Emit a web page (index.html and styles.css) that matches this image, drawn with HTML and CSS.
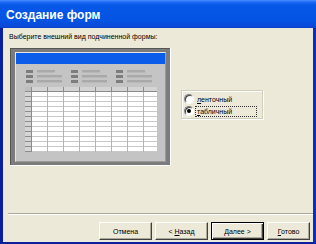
FILE: index.html
```html
<!DOCTYPE html>
<html>
<head>
<meta charset="utf-8">
<link rel="stylesheet" href="styles.css">
</head>
<body>
<div class="window">
  <div class="titlebar">Создание форм</div>
  <div class="content">
    <div class="prompt">Выберите внешний вид подчиненной формы:</div>
    <div class="main">
      <div class="preview">
        <div class="frame">
          <div class="panel">
            <div class="bar"></div>
            <div class="fields">
              <div class="fgroup">
                <div class="frow"><span class="lbl"></span><span class="val v1"></span></div>
                <div class="frow"><span class="lbl"></span><span class="val v2"></span></div>
                <div class="frow"><span class="lbl"></span><span class="val v2"></span></div>
              </div>
              <div class="fgroup">
                <div class="frow"><span class="lbl"></span><span class="val v1"></span></div>
                <div class="frow"><span class="lbl"></span><span class="val v2"></span></div>
                <div class="frow"><span class="lbl"></span><span class="val v2"></span></div>
              </div>
              <div class="fgroup">
                <div class="frow"><span class="lbl"></span><span class="val v1"></span></div>
                <div class="frow"><span class="lbl"></span><span class="val v2"></span></div>
                <div class="frow"><span class="lbl"></span><span class="val v2"></span></div>
              </div>
            </div>
            <div class="grid">
              <div class="corner"></div>
              <div class="colhead"></div>
              <div class="rowhead"></div>
              <div class="cells"></div>
            </div>
          </div>
        </div>
      </div>
      <div class="options">
        <div class="radiobox">
          <label class="radio"><span class="circle"></span><span class="rtext"><u>л</u>енточный</span></label>
          <label class="radio"><span class="circle checked"></span><span class="rtext focus"><u>т</u>абличный</span></label>
        </div>
      </div>
    </div>
    <div class="separator"></div>
    <div class="buttons">
      <button class="btn cancel">Отмена</button>
      <button class="btn">&lt; <u>Н</u>азад</button>
      <button class="btn default"><u>Д</u>алее &gt;</button>
      <button class="btn finish"><u>Г</u>отово</button>
    </div>
  </div>
</div>
</body>
</html>
```

FILE: styles.css
```css
html, body {
  margin: 0;
  padding: 0;
  background: #ECE9D8;
}
.window {
  width: 316px;
  height: 244px;
  box-sizing: border-box;
  display: flex;
  flex-direction: column;
  background: #ECE9D8;
  border-left: 3px solid #0a1f9c;
  border-right: 3px solid #0a2fbf;
  border-bottom: 2px solid #0a1f9c;
  font-family: "Liberation Sans", Arial, sans-serif;
  font-size: 7px;
  color: #000;
}
.titlebar {
  height: 28px;
  margin: 0 -3px;
  padding-left: 6px;
  box-sizing: border-box;
  display: flex;
  align-items: center;
  padding-top: 1px;
  color: #fff;
  font-family: "Liberation Sans", Arial, sans-serif;
  font-weight: bold;
  font-size: 12px;
  background: linear-gradient(to bottom, #4a8dff 0px, #1f6cf5 2px, #0858e8 5px, #0454e4 20px, #0b4ad8 26px, #0a3fc4 28px);
}
.content {
  flex: 1;
  display: flex;
  flex-direction: column;
}
.prompt {
  padding: 5px 0 0 6px;
  height: 14px;
  box-sizing: border-box;
  line-height: 8px;
}
.main {
  display: flex;
  align-items: flex-start;
  padding-left: 7px;
  margin-top: 6px;
  height: 165px;
}
.preview {
  border-right: 1px solid #fff;
  border-bottom: 1px solid #fff;
}
.frame {
  background: #7c7c7c;
  border-top: 1px solid #555;
  border-left: 1px solid #555;
  padding: 3px 4px 3px 4px;
}
.panel {
  width: 151px;
  height: 110px;
  background: #c4c4c4;
  border-top: 1px solid #e6e6e6;
  border-left: 1px solid #e6e6e6;
  border-right: 1px solid #9a9a9a;
  border-bottom: 1px solid #9a9a9a;
  box-sizing: border-box;
  padding: 0;
}
.bar {
  height: 11px;
  background: #0b5ce8;
}
.fields {
  display: flex;
  padding: 6px 0 0 10px;
  gap: 0;
}
.fgroup {
  width: 45px;
  display: flex;
  flex-direction: column;
  gap: 2px;
}
.frow {
  display: flex;
  height: 3px;
  gap: 4px;
}
.lbl {
  width: 7px;
  background: #7d7d7d;
}
.val {
  background: #a9a9a9;
  border-bottom: 1px solid #b8b8b8;
  box-sizing: border-box;
}
.v1 { width: 18px; }
.v2 { width: 25px; }
.grid {
  margin: 4px 0 0 9px;
  width: 132px;
  height: 65px;
  display: grid;
  grid-template-columns: 7px 1fr;
  grid-template-rows: 5px 1fr;
}
.corner {
  background: #bdbdbd;
  border-right: 1px solid #8c8c8c;
  border-bottom: 1px solid #8c8c8c;
  box-sizing: border-box;
}
.colhead {
  background-color: #d4d4d4;
  background-image: repeating-linear-gradient(to right, transparent 0 15px, #8c8c8c 15px 16px);
  border-bottom: 1px solid #8c8c8c;
  box-sizing: border-box;
}
.rowhead {
  background-color: #d4d4d4;
  background-image: repeating-linear-gradient(to bottom, transparent 0 4px, #8c8c8c 4px 5px);
  border-right: 1px solid #8c8c8c;
  box-sizing: border-box;
}
.cells {
  background-color: #fff;
  background-image:
    repeating-linear-gradient(to right, transparent 0 15px, #b4b4b4 15px 16px),
    repeating-linear-gradient(to bottom, transparent 0 4px, #c8c8c8 4px 5px);
}
.options {
  margin-left: 10px;
  margin-top: 42px;
}
.radiobox {
  width: 82px;
  height: 29px;
  box-sizing: border-box;
  border: 1px solid #d0d0bf;
  box-shadow: inset 1px 1px 0 #fff, 1px 1px 0 #fff;
  display: flex;
  flex-direction: column;
  padding: 3px 0 0 2px;
  gap: 2px;
}
.radio {
  display: flex;
  align-items: center;
  height: 10px;
  gap: 2px;
}
.circle {
  width: 10px;
  height: 10px;
  box-sizing: border-box;
  border-radius: 50%;
  background: #fff;
  border: 1px solid;
  border-color: #808080 #fff #fff #808080;
  box-shadow: inset 1px 1px 0 #404040;
  position: relative;
}
.circle.checked::after {
  content: "";
  position: absolute;
  left: 2px;
  top: 2px;
  width: 4px;
  height: 4px;
  border-radius: 50%;
  background: #000;
}
.rtext {
  padding: 0 1px;
  line-height: 9px;
}
.rtext.focus {
  outline: 1px dotted #333;
  width: 58px;
}
.separator {
  margin: 0 0 0 5px;
  height: 1px;
  background: #aca899;
  border-bottom: 1px solid #fff;
}
.buttons {
  display: flex;
  justify-content: flex-end;
  gap: 3px;
  padding-right: 3px;
  margin-top: 7px;
}
.btn {
  width: 53px;
  height: 18px;
  margin: 0;
  padding: 0;
  box-sizing: border-box;
  font-family: "Liberation Sans", Arial, sans-serif;
  font-size: 7px;
  color: #000;
  background: #ECE9D8;
  border: 1px solid;
  border-color: #fff #404040 #404040 #fff;
  box-shadow: inset -1px -1px 0 #aca899;
}
.btn.finish { width: 43px; }
.btn.default {
  border: 1px solid #000;
  box-shadow: inset 1px 1px 0 #fff, inset -1px -1px 0 #404040, inset -2px -2px 0 #aca899;
}
```
